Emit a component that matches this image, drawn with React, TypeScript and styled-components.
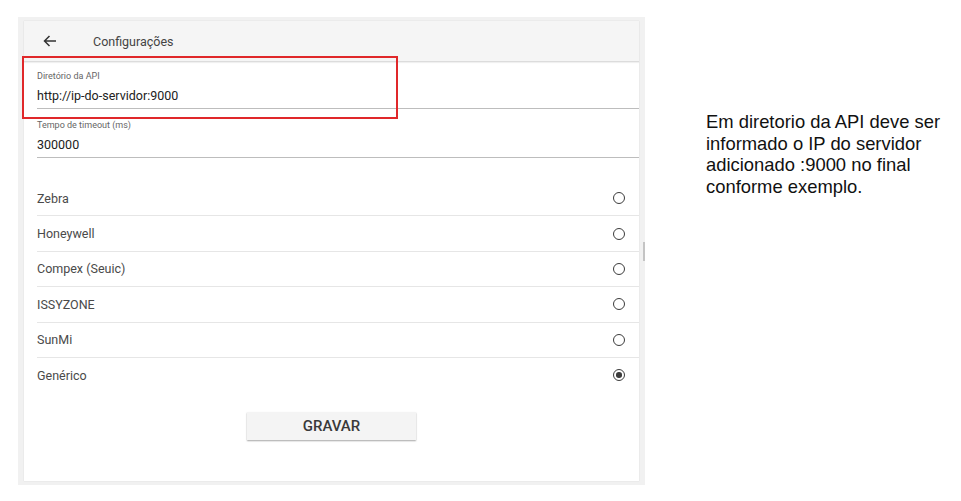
import React from 'react'
import styled, { createGlobalStyle } from 'styled-components'

const GlobalStyle = createGlobalStyle`
  html, body {
    margin: 0;
    padding: 0;
    background: #ffffff;
  }
`

const Page = styled.div`
  display: flex;
  align-items: flex-start;
  width: 961px;
  height: 501px;
  padding: 17px 0 0 18px;
  box-sizing: border-box;
  font-family: Roboto, "Noto Sans", sans-serif;
`

const Frame = styled.div`
  position: relative;
  width: 627px;
  height: 468px;
  padding: 4px 6px 4px 6px;
  box-sizing: border-box;
  background: #f1f1f1;
`

const Card = styled.div`
  display: flex;
  flex-direction: column;
  height: 100%;
  background: #ffffff;
  box-shadow: 0 0 1px rgba(0, 0, 0, 0.15);
`

const Header = styled.div`
  display: flex;
  align-items: center;
  height: 40px;
  padding-left: 19px;
  background: #f5f5f5;
  border-bottom: 1px solid #dcdcdc;
  box-shadow: 0 1px 1px rgba(0, 0, 0, 0.06);
`

const HeaderTitle = styled.span`
  margin-left: 36px;
  font-size: 12.5px;
  color: #444;
`

const Body = styled.div`
  display: flex;
  flex-direction: column;
  padding-left: 13px;
`

const Field = styled.div<{ $top: number }>`
  margin-top: ${p => p.$top}px;
  padding-bottom: 3px;
  border-bottom: 1px solid #bdbdbd;
`

const Label = styled.div`
  font-size: 9px;
  line-height: 12px;
  color: #666;
`

const Value = styled.div`
  margin-top: 5px;
  font-size: 12.5px;
  line-height: 18px;
  color: #222;
`

const List = styled.div`
  margin-top: 23px;
  display: flex;
  flex-direction: column;
`

const Row = styled.div`
  display: flex;
  align-items: center;
  justify-content: space-between;
  height: 34.4px;
  padding-right: 14px;
  font-size: 12.5px;
  color: #4a4a4a;
  border-bottom: 1px solid #e6e6e6;

  &:last-child {
    border-bottom: none;
  }
`

const Radio = styled.span<{ $checked: boolean }>`
  display: flex;
  align-items: center;
  justify-content: center;
  width: 12px;
  height: 12px;
  box-sizing: border-box;
  border: 1.6px solid #3c3c3c;
  border-radius: 50%;

  &::after {
    content: '';
    display: ${p => (p.$checked ? 'block' : 'none')};
    width: 5.5px;
    height: 5.5px;
    border-radius: 50%;
    background: #3c3c3c;
  }
`

const Footer = styled.div`
  display: flex;
  justify-content: center;
  margin-top: 20px;
`

const Button = styled.button`
  width: 169px;
  height: 28px;
  border: none;
  background: #f4f4f4;
  box-shadow: 0 1px 1.5px rgba(0, 0, 0, 0.35);
  font-family: Roboto, "Noto Sans", sans-serif;
  font-size: 15px;
  font-weight: 500;
  color: #3a3a3a;
  text-transform: uppercase;
  cursor: pointer;
`

const Highlight = styled.div`
  position: absolute;
  left: 4px;
  top: 39px;
  width: 376px;
  height: 63px;
  box-sizing: border-box;
  border: 2px solid #e0282a;
  pointer-events: none;
`

const ScrollThumb = styled.div`
  position: absolute;
  right: 0;
  top: 225px;
  width: 2px;
  height: 19px;
  background: #c4c4c4;
`

const Note = styled.p`
  margin: 94px 0 0 61px;
  font-family: "Liberation Sans", Arial, sans-serif;
  font-size: 18.4px;
  line-height: 21.7px;
  color: #111;
`

const BackArrow = () => (
  <svg width="14" height="14" viewBox="0 0 14 14">
    <path d="M13 7 H1.5 M6.5 2 L1.5 7 L6.5 12" fill="none" stroke="#333" strokeWidth="1.5" />
  </svg>
)

const devices = ['Zebra', 'Honeywell', 'Compex (Seuic)', 'ISSYZONE', 'SunMi', 'Genérico']

const App = () => {
  const selected = 'Genérico'
  return (
    <>
      <GlobalStyle />
      <Page>
        <Frame>
          <Card>
            <Header>
              <BackArrow />
              <HeaderTitle>Configurações</HeaderTitle>
            </Header>
            <Body>
              <Field $top={8}>
                <Label>Diretório da API</Label>
                <Value>http://ip-do-servidor:9000</Value>
              </Field>
              <Field $top={10}>
                <Label>Tempo de timeout (ms)</Label>
                <Value>300000</Value>
              </Field>
              <List>
                {devices.map(name => (
                  <Row key={name}>
                    {name}
                    <Radio $checked={name === selected} />
                  </Row>
                ))}
              </List>
            </Body>
            <Footer>
              <Button>Gravar</Button>
            </Footer>
          </Card>
          <Highlight />
          <ScrollThumb />
        </Frame>
        <Note>
          Em diretorio da API deve ser
          <br />
          informado o IP do servidor
          <br />
          adicionado :9000 no final
          <br />
          conforme exemplo.
        </Note>
      </Page>
    </>
  )
}

export default App
